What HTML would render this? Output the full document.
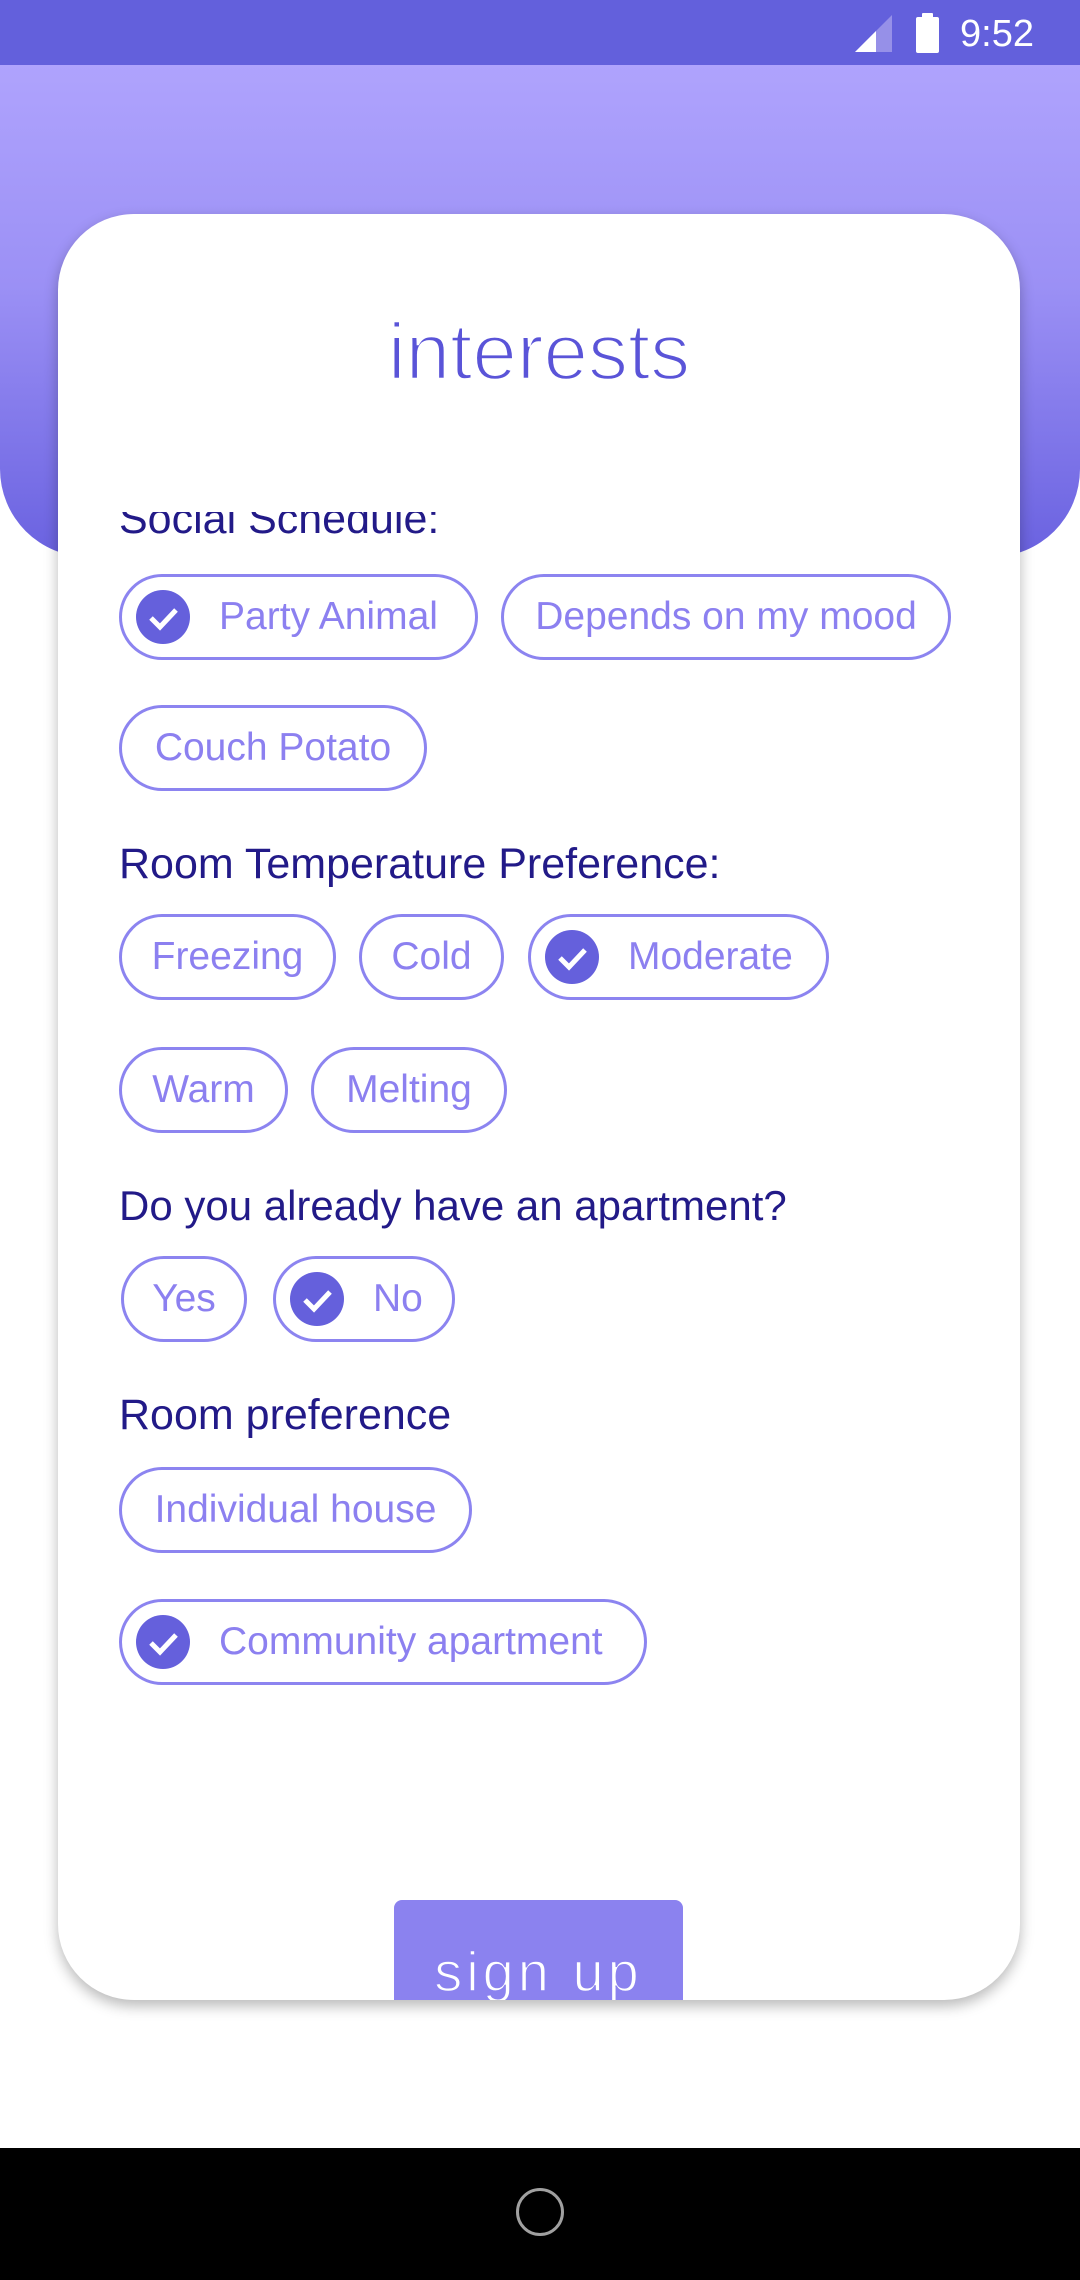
<!DOCTYPE html>
<html><head><meta charset="utf-8"><style>
*{margin:0;padding:0;box-sizing:border-box}
body{width:1080px;height:2280px;position:relative;overflow:hidden;background:#fff;font-family:"Liberation Sans",sans-serif}
.status{position:absolute;left:0;top:0;width:1080px;height:65px;background:#6360dc}
.hdr{position:absolute;left:0;top:65px;width:1080px;height:492px;background:linear-gradient(#afa3fd,#9b90f5 45%,#6a62e0);border-radius:0 0 88px 88px}
.card{position:absolute;left:58px;top:214px;width:962px;height:1786px;background:#fff;border-radius:76px;box-shadow:0 6px 14px rgba(0,0,0,.28);overflow:hidden}
.title{position:absolute;left:0;width:962px;top:98px;text-align:center;font-size:80px;color:#5a54d8;-webkit-text-stroke:2.5px #fff;line-height:1}
.clip{position:absolute;left:0;top:298px;width:962px;height:1490px;overflow:hidden}
.lbl{position:absolute;left:61px;font-size:43px;color:#221a88;white-space:nowrap;line-height:1}
.chip{position:absolute;height:86px;border:3px solid #8c84f0;border-radius:43px;color:#8c80f0;font-size:39px;line-height:80px;white-space:nowrap;text-align:center}
.ck{position:absolute;left:14px;top:13px;width:54px;height:54px;border-radius:50%;background:#6560dc}
.ck svg{position:absolute;left:0;top:0}
.btn{position:absolute;left:336px;top:1686px;width:289px;height:120px;background:#8b82ef;border-radius:8px}
.btn span{position:absolute;left:0;width:289px;text-align:center;top:44px;font-size:56px;color:#fff;letter-spacing:4px;line-height:1;-webkit-text-stroke:1.5px #8b82ef}
.nav{position:absolute;left:0;top:2148px;width:1080px;height:132px;background:#000}
</style></head><body>
<div class="status">
<svg style="position:absolute;left:855px;top:15px" width="37" height="37"><polygon points="37,0 37,37 0,37" fill="#9690e8"/><polygon points="21,16 21,37 0,37" fill="#fff"/></svg>
<div style="position:absolute;left:922px;top:13px;width:11px;height:5px;background:#fff;border-radius:1px"></div>
<div style="position:absolute;left:916px;top:17px;width:23px;height:36px;background:#fff;border-radius:2px"></div>
<div style="position:absolute;left:960px;top:12px;font-size:38px;color:#fff;line-height:44px">9:52</div>
</div>
<div class="hdr"></div>
<div class="card">
<div class="title">interests</div>
<div class="clip">
<div class="lbl" style="top:-14px">Social Schedule:</div>
<div class="chip" style="left:61px;top:62px;width:359px"><div class="ck"><svg width="54" height="54"><path d="M15 28l9 9 16-17" stroke="#fff" stroke-width="5" fill="none"/></svg></div><span style="position:absolute;left:97px">Party Animal</span></div>
<div class="chip" style="left:443px;top:62px;width:450px">Depends on my mood</div>
<div class="chip" style="left:61px;top:193px;width:308px">Couch Potato</div>
<div class="lbl" style="top:331px">Room Temperature Preference:</div>
<div class="chip" style="left:61px;top:402px;width:217px">Freezing</div>
<div class="chip" style="left:301px;top:402px;width:145px">Cold</div>
<div class="chip" style="left:470px;top:402px;width:301px"><div class="ck"><svg width="54" height="54"><path d="M15 28l9 9 16-17" stroke="#fff" stroke-width="5" fill="none"/></svg></div><span style="position:absolute;left:97px">Moderate</span></div>
<div class="chip" style="left:61px;top:535px;width:169px">Warm</div>
<div class="chip" style="left:253px;top:535px;width:196px">Melting</div>
<div class="lbl" style="top:673px;font-size:42px">Do you already have an apartment?</div>
<div class="chip" style="left:63px;top:744px;width:126px">Yes</div>
<div class="chip" style="left:215px;top:744px;width:182px"><div class="ck"><svg width="54" height="54"><path d="M15 28l9 9 16-17" stroke="#fff" stroke-width="5" fill="none"/></svg></div><span style="position:absolute;left:97px">No</span></div>
<div class="lbl" style="top:882px">Room preference</div>
<div class="chip" style="left:61px;top:955px;width:353px">Individual house</div>
<div class="chip" style="left:61px;top:1087px;width:528px"><div class="ck"><svg width="54" height="54"><path d="M15 28l9 9 16-17" stroke="#fff" stroke-width="5" fill="none"/></svg></div><span style="position:absolute;left:97px">Community apartment</span></div>
</div>
<div class="btn"><span>sign up</span></div>
</div>
<div class="nav"><div style="position:absolute;left:516px;top:40px;width:48px;height:48px;border:3px solid #a0a0a0;border-radius:50%"></div></div>
</body></html>
